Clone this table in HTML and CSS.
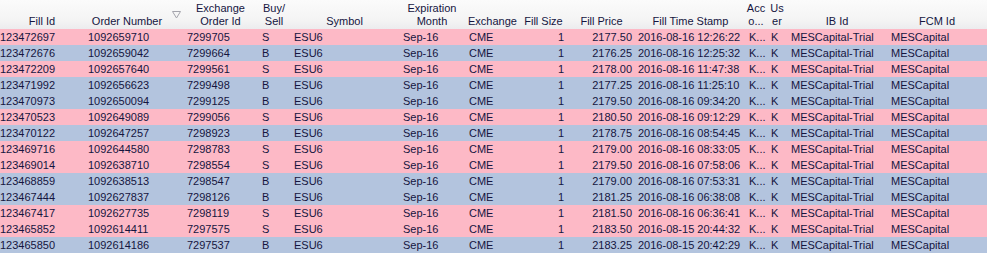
FILE: index.html
```html
<!DOCTYPE html>
<html>
<head>
<meta charset="utf-8">
<link rel="stylesheet" href="styles.css">
</head>
<body>
<table class="grid">
  <colgroup>
    <col class="c-fill"><col class="c-order"><col class="c-exord"><col class="c-side"><col class="c-sym"><col class="c-exp"><col class="c-exch"><col class="c-size"><col class="c-price"><col class="c-time"><col class="c-acc"><col class="c-user"><col class="c-ib"><col class="c-fcm">
  </colgroup>
  <thead>
    <tr>
      <th>Fill Id</th>
      <th class="sorted">Order Number<svg class="sort" width="9" height="8" viewBox="0 0 9 8"><polygon points="0.5,0.5 8.5,0.5 4.5,7" fill="none" stroke="#a4a4ac" stroke-width="1"/></svg></th>
      <th>Exchange<br>Order Id</th>
      <th>Buy/<br>Sell</th>
      <th>Symbol</th>
      <th>Expiration<br>Month</th>
      <th>Exchange</th>
      <th>Fill Size</th>
      <th>Fill Price</th>
      <th>Fill Time Stamp</th>
      <th>Acc<br>o...</th>
      <th>Us<br>er</th>
      <th>IB Id</th>
      <th>FCM Id</th>
    </tr>
  </thead>
  <tbody>
    <tr class="sell"><td>123472697</td><td>1092659710</td><td>7299705</td><td>S</td><td>ESU6</td><td>Sep-16</td><td>CME</td><td class="num">1</td><td class="num">2177.50</td><td>2016-08-16 12:26:22</td><td>K...</td><td>K</td><td>MESCapital-Trial</td><td>MESCapital</td></tr>
    <tr class="buy"><td>123472676</td><td>1092659042</td><td>7299664</td><td>B</td><td>ESU6</td><td>Sep-16</td><td>CME</td><td class="num">1</td><td class="num">2176.25</td><td>2016-08-16 12:25:32</td><td>K...</td><td>K</td><td>MESCapital-Trial</td><td>MESCapital</td></tr>
    <tr class="sell"><td>123472209</td><td>1092657640</td><td>7299561</td><td>S</td><td>ESU6</td><td>Sep-16</td><td>CME</td><td class="num">1</td><td class="num">2178.00</td><td>2016-08-16 11:47:38</td><td>K...</td><td>K</td><td>MESCapital-Trial</td><td>MESCapital</td></tr>
    <tr class="buy"><td>123471992</td><td>1092656623</td><td>7299498</td><td>B</td><td>ESU6</td><td>Sep-16</td><td>CME</td><td class="num">1</td><td class="num">2177.25</td><td>2016-08-16 11:25:10</td><td>K...</td><td>K</td><td>MESCapital-Trial</td><td>MESCapital</td></tr>
    <tr class="buy"><td>123470973</td><td>1092650094</td><td>7299125</td><td>B</td><td>ESU6</td><td>Sep-16</td><td>CME</td><td class="num">1</td><td class="num">2179.50</td><td>2016-08-16 09:34:20</td><td>K...</td><td>K</td><td>MESCapital-Trial</td><td>MESCapital</td></tr>
    <tr class="sell"><td>123470523</td><td>1092649089</td><td>7299056</td><td>S</td><td>ESU6</td><td>Sep-16</td><td>CME</td><td class="num">1</td><td class="num">2180.50</td><td>2016-08-16 09:12:29</td><td>K...</td><td>K</td><td>MESCapital-Trial</td><td>MESCapital</td></tr>
    <tr class="buy"><td>123470122</td><td>1092647257</td><td>7298923</td><td>B</td><td>ESU6</td><td>Sep-16</td><td>CME</td><td class="num">1</td><td class="num">2178.75</td><td>2016-08-16 08:54:45</td><td>K...</td><td>K</td><td>MESCapital-Trial</td><td>MESCapital</td></tr>
    <tr class="sell"><td>123469716</td><td>1092644580</td><td>7298783</td><td>S</td><td>ESU6</td><td>Sep-16</td><td>CME</td><td class="num">1</td><td class="num">2179.00</td><td>2016-08-16 08:33:05</td><td>K...</td><td>K</td><td>MESCapital-Trial</td><td>MESCapital</td></tr>
    <tr class="sell"><td>123469014</td><td>1092638710</td><td>7298554</td><td>S</td><td>ESU6</td><td>Sep-16</td><td>CME</td><td class="num">1</td><td class="num">2179.50</td><td>2016-08-16 07:58:06</td><td>K...</td><td>K</td><td>MESCapital-Trial</td><td>MESCapital</td></tr>
    <tr class="buy"><td>123468859</td><td>1092638513</td><td>7298547</td><td>B</td><td>ESU6</td><td>Sep-16</td><td>CME</td><td class="num">1</td><td class="num">2179.00</td><td>2016-08-16 07:53:31</td><td>K...</td><td>K</td><td>MESCapital-Trial</td><td>MESCapital</td></tr>
    <tr class="buy"><td>123467444</td><td>1092627837</td><td>7298126</td><td>B</td><td>ESU6</td><td>Sep-16</td><td>CME</td><td class="num">1</td><td class="num">2181.25</td><td>2016-08-16 06:38:08</td><td>K...</td><td>K</td><td>MESCapital-Trial</td><td>MESCapital</td></tr>
    <tr class="sell"><td>123467417</td><td>1092627735</td><td>7298119</td><td>S</td><td>ESU6</td><td>Sep-16</td><td>CME</td><td class="num">1</td><td class="num">2181.50</td><td>2016-08-16 06:36:41</td><td>K...</td><td>K</td><td>MESCapital-Trial</td><td>MESCapital</td></tr>
    <tr class="sell"><td>123465852</td><td>1092614411</td><td>7297575</td><td>S</td><td>ESU6</td><td>Sep-16</td><td>CME</td><td class="num">1</td><td class="num">2183.50</td><td>2016-08-15 20:44:32</td><td>K...</td><td>K</td><td>MESCapital-Trial</td><td>MESCapital</td></tr>
    <tr class="buy"><td>123465850</td><td>1092614186</td><td>7297537</td><td>B</td><td>ESU6</td><td>Sep-16</td><td>CME</td><td class="num">1</td><td class="num">2183.25</td><td>2016-08-15 20:42:29</td><td>K...</td><td>K</td><td>MESCapital-Trial</td><td>MESCapital</td></tr>
  </tbody>
</table>
</body>
</html>
```
FILE: styles.css
```css
html, body {
  margin: 0;
  padding: 0;
  background: #ffffff;
}
body {
  font-family: "Liberation Sans", Arial, sans-serif;
  font-size: 11px;
  color: #15153f;
}
.grid {
  width: 987px;
  table-layout: fixed;
  border-collapse: collapse;
  border-spacing: 0;
}
.c-fill { width: 84px; }
.c-order { width: 99px; }
.c-exord { width: 75px; }
.c-side { width: 32px; }
.c-sym { width: 109px; }
.c-exp { width: 66px; }
.c-exch { width: 55px; }
.c-size { width: 47px; }
.c-price { width: 69px; }
.c-time { width: 109px; }
.c-acc { width: 22px; }
.c-user { width: 20px; }
.c-ib { width: 100px; }
.c-fcm { width: 100px; }

thead tr {
  height: 29px;
  background: linear-gradient(#fbfbfb 0%, #f4f4f4 70%, #ececee 100%);
}
th {
  font-weight: normal;
  text-align: center;
  vertical-align: bottom;
  line-height: 13px;
  padding: 0 0 1px 0;
  white-space: nowrap;
  overflow: hidden;
}
th.sorted {
  position: relative;
  padding-right: 13px;
}
.sort {
  position: absolute;
  right: 2px;
  top: 11px;
}
tbody tr {
  height: 16px;
}
td {
  line-height: 15px;
  padding: 1px 0 0 4px;
  white-space: nowrap;
  overflow: hidden;
  vertical-align: top;
}
td:first-child {
  padding-left: 0;
}
td.num {
  text-align: right;
  padding-left: 0;
  padding-right: 3px;
}
td:nth-child(9) {
  padding-right: 4px;
}
td:nth-child(10) {
  padding-left: 2px;
}
tr.sell {
  background: #fdb9c6;
}
tr.buy {
  background: #b3c4de;
}
```
